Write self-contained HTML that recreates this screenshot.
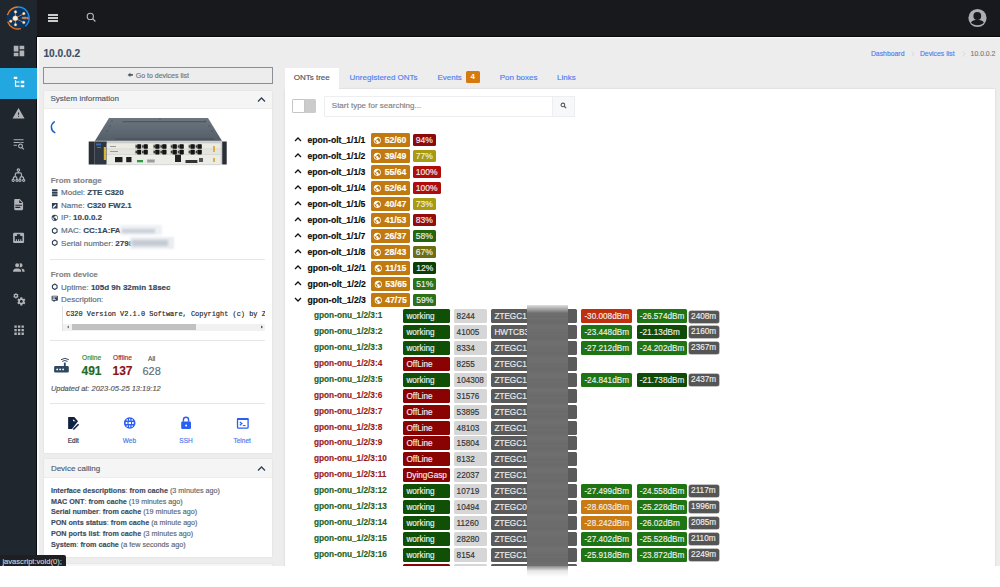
<!DOCTYPE html>
<html><head><meta charset="utf-8"><style>
*{box-sizing:border-box}
html,body{margin:0;padding:0;width:1000px;height:587px;overflow:hidden;background:#fff;font-family:"Liberation Sans", sans-serif}
.t,.t *,.olt span,.onu span{-webkit-text-stroke:0.15px currentColor}
#app{position:absolute;left:0;top:0;width:1000px;height:566px;background:#ededed;overflow:hidden}
#sidebar{position:absolute;left:0;top:0;width:37px;height:566px;background:#20262e}
#topbar{position:absolute;left:37px;top:0;width:963px;height:36.5px;background:#18191d;border-bottom:1px solid #060709}
.abs{position:absolute}
.t{position:absolute;white-space:nowrap}
.card{position:absolute;background:#fff;box-shadow:0 0 1px rgba(0,0,0,.15)}
.chead{position:absolute;left:0;top:0;right:0;background:#f5f5f5;border-bottom:1px solid #ececec}
.olt{position:absolute;left:293px;height:13.5px;white-space:nowrap;font-size:0}
.chev{position:absolute;left:1px;top:3px}
.oname{display:inline-block;vertical-align:top;margin-left:14.6px;margin-top:1px;line-height:13.5px;font-size:8.6px;font-weight:bold;color:#0a0a0a}
.ocnt{display:inline-block;vertical-align:top;margin-left:5.3px;height:13.5px;width:39px;background:#c17a10;border-radius:1.5px;color:#fff;font-size:8.6px;font-weight:bold;line-height:15px;padding-left:2.6px}
.ocnt svg{vertical-align:-1.5px;margin-right:0.5px}
.opct{display:inline-block;vertical-align:top;margin-left:3.1px;margin-top:0.7px;height:11.6px;padding:0 3px;border-radius:1.5px;color:#eee;font-size:8.5px;line-height:13px}
.onu{position:absolute;left:0;height:14px;white-space:nowrap}
.nname{position:absolute;left:314px;top:-1px;line-height:15px;font-size:8.25px;font-weight:bold}
.b{position:absolute;top:0;height:14px;line-height:15.5px;font-size:8.2px;color:#eee;border-radius:1.5px;padding-left:3px}
.st{left:403.4px;width:46.2px}
.num{left:453.6px;width:33.4px;background:#d6d6d6;color:#333}
.ser{left:491.4px;width:85.8px;background:#5b5b5b;color:#eee}
.s1{left:581.4px;width:50.5px}
.s2{left:636.7px;width:50.3px}
.dist{left:689.1px;width:30.1px;top:1.3px;height:12px;line-height:12.6px;background:#555;border-radius:2px;padding-left:2px;box-shadow:0 0 0 0.5px #888}
</style></head><body>
<div id="app">
<div id="topbar">
  <div class="abs" style="left:10.7px;top:14.25px;width:10.5px;height:1.5px;background:#cdcdcd"></div>
  <div class="abs" style="left:10.7px;top:17.2px;width:10.5px;height:1.5px;background:#cdcdcd"></div>
  <div class="abs" style="left:10.7px;top:20.15px;width:10.5px;height:1.5px;background:#cdcdcd"></div>
  <svg class="abs" style="left:45px;top:8px" width="16" height="18" viewBox="82 8 16 18"><circle cx="90.3" cy="16.4" r="3.1" fill="none" stroke="#b8bcc0" stroke-width="1.1"/><path d="M92.6 18.7L95.4 21.5" stroke="#b8bcc0" stroke-width="1.2"/></svg>
  <svg class="abs" style="left:927px;top:5px" width="28" height="26" viewBox="964 5 28 26"><circle cx="977.5" cy="18" r="9.1" fill="#a9aeb4"/><circle cx="977.3" cy="16" r="3.9" fill="#18191d"/><path d="M971 22.5C972.8 18.9 982 18.9 983.8 22.5C981.6 26 973.2 26 971 22.5Z" fill="#18191d"/></svg>
</div>
<div id="sidebar">
  <svg class="abs" style="left:5.8px;top:6.1px" width="24" height="24" viewBox="0 0 24 24">
    <circle cx="12" cy="12" r="11.4" fill="#0a3563"/>
    <path d="M1.37 9.15A11.0 11.0 0 0 1 12.38 1.01" stroke="#f07818" stroke-width="1.4" fill="none"/>
    <path d="M12.38 1.01A11.0 11.0 0 0 1 19.36 20.17" stroke="#1a90e6" stroke-width="1.4" fill="none"/>
    <path d="M14.85 22.63A11.0 11.0 0 0 1 1.66 15.76" stroke="#e8701a" stroke-width="1.4" fill="none"/>
    <g stroke="#e89a4a" stroke-width="0.7"><path d="M9.3 12.3L9.5 5.9M9.3 12.3L17.8 7.6M9.3 12.3L4.7 15.2M9.3 12.3L9.5 18.8M9.3 12.3L17.8 16.5"/></g>
    <g fill="#fff3e3" stroke="#f0a050" stroke-width="0.4"><circle cx="9.3" cy="12.3" r="2.5"/><circle cx="9.5" cy="5.9" r="1.3"/><circle cx="17.8" cy="7.6" r="1.3"/><circle cx="4.7" cy="15.2" r="1.3"/><circle cx="9.5" cy="18.8" r="1.3"/><circle cx="17.8" cy="16.5" r="1.3"/></g>
    <text x="18.9" y="13.4" font-size="3.4" fill="none" stroke="#e89a4a" stroke-width="0.35" font-family="Liberation Sans" text-anchor="middle">oms</text>
  </svg>
  <div class="abs" style="left:0;top:68px;width:37px;height:31px;background:#22a7e0"></div>
  <svg style="position:absolute;left:11.9px;top:44.15px" width="14" height="14" viewBox="0 0 24 24"><path fill="#b0b3b8" fill-rule="evenodd" d="M13,3V9H21V3M13,21H21V11H13M3,21H11V15H3M3,13H11V3H3V13Z"/></svg>
<svg style="position:absolute;left:11.9px;top:74.9px" width="14" height="14" viewBox="0 0 24 24"><path fill="#ffffff" fill-rule="evenodd" d="M3,3H9V7H3V3M15,10H21V14H15V10M15,17H21V21H15V17M13,13H7V18H13V20H7L5,20V9H7V11H13V13Z"/></svg>
<svg style="position:absolute;left:12.05px;top:106.7px" width="13.1" height="13.1" viewBox="0 0 24 24"><path fill="#b0b3b8" fill-rule="evenodd" d="M13,14H11V10H13M13,18H11V16H13M1,21H23L12,2L1,21Z"/></svg>
<svg style="position:absolute;left:11.76px;top:137.1px" width="13.2" height="13.2" viewBox="0 0 24 24"><path fill="#b0b3b8" fill-rule="evenodd" d="M19.31 18.9L22.39 22L21 23.39L17.88 20.32C17.19 20.75 16.37 21 15.5 21C13 21 11 19 11 16.5C11 14 13 12 15.5 12C18 12 20 14 20 16.5C20 17.38 19.75 18.21 19.31 18.9M15.5 19C16.88 19 18 17.88 18 16.5C18 15.12 16.88 14 15.5 14C14.12 14 13 15.12 13 16.5C13 17.88 14.12 19 15.5 19M21 4V6H3V4H21M3 16V14H9V16H3M3 11V9H21V11H18.97C17.96 10.37 16.77 10 15.5 10C14.23 10 13.04 10.37 12.03 11H3Z"/></svg>
<svg style="position:absolute;left:8px;top:165px" width="22" height="21" viewBox="8 165 22 21"><g fill="none" stroke="#b0b3b8" stroke-width="1.15"><circle cx="18.4" cy="170" r="1.2"/><path d="M18.4 171.2V172.8M15.3 176V174.3Q15.3 172.8 16.8 172.8H20Q21.5 172.8 21.5 174.3V176"/><path d="M13.2 179.3Q13.2 176.6 15.2 176.6Q17 176.6 17 179.3M19.9 179.3Q19.9 176.6 21.7 176.6Q23.7 176.6 23.7 179.3"/><circle cx="13.2" cy="180.3" r="1.1"/><circle cx="17" cy="180.3" r="1.1"/><circle cx="19.9" cy="180.3" r="1.1"/><circle cx="23.7" cy="180.3" r="1.1"/></g></svg>
<svg style="position:absolute;left:11.85px;top:198.3px" width="13.3" height="13.3" viewBox="0 0 24 24"><path fill="#b0b3b8" fill-rule="evenodd" d="M13,9H18.5L13,3.5V9M6,2H14L20,8V20A2,2 0 0,1 18,22H6C4.89,22 4,21.1 4,20V4C4,2.89 4.89,2 6,2M15,18V16H6V18H15M18,14V12H6V14H18Z"/></svg>
<svg style="position:absolute;left:12.0px;top:230.7px" width="13.2" height="13.2" viewBox="0 0 24 24"><path fill="#b0b3b8" fill-rule="evenodd" d="M7,15H9V18H11V15H13V18H15V15H17V18H19V9H15V6H9V9H5V18H7V15M4.38,3H19.63C20.94,3 22,4.06 22,5.38V19.63A2.37,2.37 0 0,1 19.63,22H4.38C3.06,22 2,20.94 2,19.63V5.38C2,4.06 3.06,3 4.38,3Z"/></svg>
<svg style="position:absolute;left:11.75px;top:261.2px" width="13.7" height="13.7" viewBox="0 0 24 24"><path fill="#b0b3b8" fill-rule="evenodd" d="M16,17V19H2V17C2,17 2,13 9,13C16,13 16,17 16,17M12.5,7.5A3.5,3.5 0 1,0 9,11A3.5,3.5 0 0,0 12.5,7.5M15.94,13A5.32,5.32 0 0,1 18,17V19H22V17C22,17 22,13.37 15.94,13M15,4A3.39,3.39 0 0,0 13.07,4.59A5,5 0 0,1 13.07,10.41A3.39,3.39 0 0,0 15,11A3.5,3.5 0 0,0 18.5,7.5A3.5,3.5 0 0,0 15,4Z"/></svg>
<svg style="position:absolute;left:11.6px;top:291.8px" width="14.1" height="14.1" viewBox="0 0 24 24"><path fill="#b0b3b8" fill-rule="evenodd" d="M15.9,18.45C17.25,18.45 18.35,17.35 18.35,16C18.35,14.65 17.25,13.55 15.9,13.55C14.54,13.55 13.45,14.65 13.45,16C13.45,17.35 14.54,18.45 15.9,18.45M21.1,16.68L22.58,17.84C22.71,17.95 22.75,18.13 22.66,18.29L21.26,20.71C21.17,20.86 21,20.92 20.83,20.86L19.09,20.16C18.73,20.44 18.33,20.67 17.91,20.85L17.64,22.7C17.62,22.87 17.47,23 17.3,23H14.5C14.32,23 14.18,22.87 14.15,22.7L13.89,20.85C13.46,20.67 13.07,20.44 12.71,20.16L10.96,20.86C10.81,20.92 10.62,20.86 10.54,20.71L9.14,18.29C9.05,18.13 9.09,17.95 9.22,17.84L10.7,16.68L10.65,16L10.7,15.31L9.22,14.16C9.09,14.05 9.05,13.86 9.14,13.71L10.54,11.29C10.62,11.13 10.81,11.07 10.96,11.13L12.71,11.84C13.07,11.56 13.46,11.32 13.89,11.15L14.15,9.29C14.18,9.13 14.32,9 14.5,9H17.3C17.47,9 17.62,9.13 17.64,9.29L17.91,11.15C18.33,11.32 18.73,11.56 19.09,11.84L20.83,11.13C21,11.07 21.17,11.13 21.26,11.29L22.66,13.71C22.75,13.86 22.71,14.05 22.58,14.16L21.1,15.31L21.15,16L21.1,16.68M6.69,8.07C7.56,8.07 8.26,7.37 8.26,6.5C8.26,5.63 7.56,4.92 6.69,4.92A1.58,1.58 0 0,0 5.11,6.5C5.11,7.37 5.82,8.07 6.69,8.07M10.03,6.94L11,7.68C11.07,7.75 11.09,7.87 11.03,7.97L10.13,9.53C10.08,9.63 9.96,9.67 9.86,9.63L8.74,9.18L8,9.62L7.81,10.81C7.79,10.92 7.7,11 7.59,11H5.79C5.67,11 5.58,10.92 5.56,10.81L5.4,9.62L4.64,9.18L3.5,9.63C3.41,9.67 3.3,9.63 3.24,9.53L2.34,7.97C2.28,7.87 2.31,7.75 2.39,7.68L3.34,6.94L3.31,6.5L3.34,6.06L2.39,5.32C2.31,5.25 2.28,5.13 2.34,5.03L3.24,3.47C3.3,3.37 3.41,3.33 3.5,3.37L4.63,3.82L5.4,3.38L5.56,2.19C5.58,2.08 5.67,2 5.79,2H7.59C7.7,2 7.79,2.08 7.81,2.19L8,3.38L8.74,3.82L9.86,3.37C9.96,3.33 10.08,3.37 10.13,3.47L11.03,5.03C11.09,5.13 11.07,5.25 11,5.32L10.03,6.06L10.06,6.5L10.03,6.94Z"/></svg>
<svg style="position:absolute;left:11.5px;top:323.0px" width="14.25" height="14.25" viewBox="0 0 24 24"><path fill="#b0b3b8" fill-rule="evenodd" d="M16,20H20V16H16M16,14H20V10H16M10,8H14V4H10M16,8H20V4H16M10,14H14V10H10M4,14H8V10H4M4,20H8V16H4M10,20H14V16H10M4,8H8V4H4V8Z"/></svg>
</div>
<div class="abs" style="left:37px;top:36.5px;width:963px;height:1.5px;background:#fafafa"></div>
<div class="abs" style="left:37px;top:36.5px;width:1.5px;height:530px;background:#fafafa"></div>
<div class="abs" style="left:36px;top:36px;width:1px;height:32px;background:#0a0c10"></div>
<div class="abs" style="left:36px;top:99px;width:1px;height:467px;background:#0a0c10"></div>

<!-- page header -->
<div class="t" style="left:43.4px;top:47.5px;font-size:10.2px;font-weight:bold;color:#3b4f66;line-height:12px">10.0.0.2</div>
<div class="t" style="left:870.9px;top:48.5px;font-size:6.86px;color:#4f7ff0;line-height:9px">Dashboard</div>
<svg class="abs" style="left:910.5px;top:50.5px" width="4" height="6" viewBox="0 0 4 6"><path d="M0.8 0.5L3 3L0.8 5.5" fill="none" stroke="#cfcfcf" stroke-width="0.7"/></svg>
<div class="t" style="left:919.9px;top:48.5px;font-size:6.86px;color:#4f7ff0;line-height:9px">Devices list</div>
<svg class="abs" style="left:961.5px;top:50.5px" width="4" height="6" viewBox="0 0 4 6"><path d="M0.8 0.5L3 3L0.8 5.5" fill="none" stroke="#cfcfcf" stroke-width="0.7"/></svg>
<div class="t" style="left:970.6px;top:48.5px;font-size:6.86px;color:#808080;line-height:9px">10.0.0.2</div>

<!-- left column -->
<div class="abs" style="left:43.1px;top:67.2px;width:229.6px;height:16.5px;border:1px solid #8a8f96;background:#ededed"></div>
<svg class="abs" style="left:122px;top:68px" width="16" height="16" viewBox="122 68 16 16"><path d="M127.6 74.9L130.4 72.7V74.1H132.9V75.7H130.4V77.1Z" fill="#505a64"/></svg>
<div class="t" style="left:135.7px;top:70.5px;font-size:7px;color:#6c757d;line-height:9px">Go to devices list</div>

<div class="card" style="left:43.8px;top:90.5px;width:228px;height:362.6px">
  <div class="chead" style="height:18.1px"></div>
</div>
<div class="t" style="left:50.5px;top:93.5px;font-size:8px;color:#4b5d70;line-height:10px">System information</div>
<svg class="abs" style="left:256.5px;top:95.5px" width="9" height="7" viewBox="0 0 9 7"><path d="M1 5.5L4.5 2L8 5.5" fill="none" stroke="#2f4254" stroke-width="1.3"/></svg>

<svg class="abs" style="left:49.8px;top:120px" width="14" height="14" viewBox="0 0 14 14"><path d="M4.3 1.8A6.2 6.2 0 0 0 4.8 12.6" fill="none" stroke="#1b62c8" stroke-width="1.5" stroke-linecap="round"/></svg>

<!-- device image -->
<svg class="abs" style="left:88px;top:116px" width="141" height="52" viewBox="0 0 141 52">
<defs><linearGradient id="topg" x1="0" y1="0" x2="0" y2="1"><stop offset="0" stop-color="#6c767f"/><stop offset="1" stop-color="#535d67"/></linearGradient></defs>
<path d="M21 2H120L134.2 25.19999999999999H6.700000000000003Z" fill="url(#topg)"/>
<path d="M34.5 5.700000000000003H118M27 23H126" stroke="#3f474f" stroke-width="0.7"/>
<circle cx="24" cy="5" r="0.5" fill="#2e353c"/>
<circle cx="22" cy="10" r="0.5" fill="#2e353c"/>
<circle cx="19" cy="15" r="0.5" fill="#2e353c"/>
<circle cx="117" cy="5" r="0.5" fill="#2e353c"/>
<circle cx="121" cy="10" r="0.5" fill="#2e353c"/>
<circle cx="124" cy="15" r="0.5" fill="#2e353c"/>
<circle cx="72" cy="2.799999999999997" r="0.5" fill="#2e353c"/>
<path d="M6.700000000000003 25.19999999999999H134.2" stroke="#cfd3d6" stroke-width="0.8"/>
<rect x="6.70" y="25.50" width="127.50" height="23.00" fill="#c9ccc8" />
<rect x="0.70" y="25.50" width="6.00" height="23.00" fill="#2a2f36" />
<rect x="134.20" y="25.50" width="4.50" height="23.00" fill="#2a2f36" />
<rect x="6.70" y="25.50" width="12.00" height="23.00" fill="#2f3742" />
<rect x="8.00" y="27.50" width="5.00" height="2.00" fill="#3a68b0" />
<rect x="9.00" y="31.00" width="4.00" height="1.00" fill="#b06030" />
<rect x="15.80" y="31.00" width="2.40" height="13.00" fill="#d9b43a" />
<rect x="18.70" y="27.30" width="114.00" height="5.40" fill="#ebebe4" />
<rect x="18.70" y="33.20" width="114.00" height="5.00" fill="#e5e5de" />
<rect x="18.70" y="38.70" width="114.00" height="9.30" fill="#ecece6" />
<rect x="47.20" y="28.00" width="6.00" height="4.90" fill="#c8c8c0" />
<rect x="49.12" y="28.20" width="4.08" height="4.60" fill="#141414" rx="0.9"/>
<rect x="47.50" y="29.30" width="1.62" height="2.30" fill="#3a3a3a" />
<rect x="53.80" y="28.00" width="6.00" height="4.90" fill="#c8c8c0" />
<rect x="55.72" y="28.20" width="4.08" height="4.60" fill="#141414" rx="0.9"/>
<rect x="54.10" y="29.30" width="1.62" height="2.30" fill="#3a3a3a" />
<rect x="47.20" y="33.50" width="6.00" height="5.00" fill="#c8c8c0" />
<rect x="49.12" y="33.70" width="4.08" height="4.70" fill="#141414" rx="0.9"/>
<rect x="47.50" y="34.80" width="1.62" height="2.40" fill="#3a3a3a" />
<rect x="53.80" y="33.50" width="6.00" height="5.00" fill="#c8c8c0" />
<rect x="55.72" y="33.70" width="4.08" height="4.70" fill="#141414" rx="0.9"/>
<rect x="54.10" y="34.80" width="1.62" height="2.40" fill="#3a3a3a" />
<rect x="65.20" y="28.00" width="6.35" height="4.90" fill="#c8c8c0" />
<rect x="67.22" y="28.20" width="4.32" height="4.60" fill="#141414" rx="0.9"/>
<rect x="65.50" y="29.30" width="1.72" height="2.30" fill="#3a3a3a" />
<rect x="72.15" y="28.00" width="6.35" height="4.90" fill="#c8c8c0" />
<rect x="74.17" y="28.20" width="4.32" height="4.60" fill="#141414" rx="0.9"/>
<rect x="72.45" y="29.30" width="1.72" height="2.30" fill="#3a3a3a" />
<rect x="65.20" y="33.50" width="6.35" height="5.00" fill="#c8c8c0" />
<rect x="67.22" y="33.70" width="4.32" height="4.70" fill="#141414" rx="0.9"/>
<rect x="65.50" y="34.80" width="1.72" height="2.40" fill="#3a3a3a" />
<rect x="72.15" y="33.50" width="6.35" height="5.00" fill="#c8c8c0" />
<rect x="74.17" y="33.70" width="4.32" height="4.70" fill="#141414" rx="0.9"/>
<rect x="72.45" y="34.80" width="1.72" height="2.40" fill="#3a3a3a" />
<rect x="82.50" y="28.00" width="6.35" height="4.90" fill="#c8c8c0" />
<rect x="84.53" y="28.20" width="4.32" height="4.60" fill="#141414" rx="0.9"/>
<rect x="82.80" y="29.30" width="1.72" height="2.30" fill="#3a3a3a" />
<rect x="89.45" y="28.00" width="6.35" height="4.90" fill="#c8c8c0" />
<rect x="91.47" y="28.20" width="4.32" height="4.60" fill="#141414" rx="0.9"/>
<rect x="89.75" y="29.30" width="1.72" height="2.30" fill="#3a3a3a" />
<rect x="82.50" y="33.50" width="6.35" height="5.00" fill="#c8c8c0" />
<rect x="84.53" y="33.70" width="4.32" height="4.70" fill="#141414" rx="0.9"/>
<rect x="82.80" y="34.80" width="1.72" height="2.40" fill="#3a3a3a" />
<rect x="89.45" y="33.50" width="6.35" height="5.00" fill="#c8c8c0" />
<rect x="91.47" y="33.70" width="4.32" height="4.70" fill="#141414" rx="0.9"/>
<rect x="89.75" y="34.80" width="1.72" height="2.40" fill="#3a3a3a" />
<rect x="100.40" y="28.00" width="6.40" height="4.90" fill="#c8c8c0" />
<rect x="102.44" y="28.20" width="4.36" height="4.60" fill="#141414" rx="0.9"/>
<rect x="100.70" y="29.30" width="1.74" height="2.30" fill="#3a3a3a" />
<rect x="107.40" y="28.00" width="6.40" height="4.90" fill="#c8c8c0" />
<rect x="109.44" y="28.20" width="4.36" height="4.60" fill="#141414" rx="0.9"/>
<rect x="107.70" y="29.30" width="1.74" height="2.30" fill="#3a3a3a" />
<rect x="100.40" y="33.50" width="6.40" height="5.00" fill="#c8c8c0" />
<rect x="102.44" y="33.70" width="4.36" height="4.70" fill="#141414" rx="0.9"/>
<rect x="100.70" y="34.80" width="1.74" height="2.40" fill="#3a3a3a" />
<rect x="107.40" y="33.50" width="6.40" height="5.00" fill="#c8c8c0" />
<rect x="109.44" y="33.70" width="4.36" height="4.70" fill="#141414" rx="0.9"/>
<rect x="107.70" y="34.80" width="1.74" height="2.40" fill="#3a3a3a" />
<rect x="27.00" y="41.00" width="7.50" height="5.20" fill="#1e1e1e" />
<rect x="38.20" y="41.00" width="5.30" height="5.20" fill="#1e1e1e" />
<rect x="49.00" y="44.00" width="6.00" height="2.30" fill="#2d9a45" />
<rect x="59.20" y="43.50" width="7.50" height="3.00" fill="#9a9a9a" />
<rect x="87.00" y="38.70" width="6.00" height="7.30" fill="#222" />
<rect x="97.50" y="44.00" width="11.90" height="3.00" fill="#333" />
<rect x="111.00" y="42.00" width="4.00" height="4.00" fill="#555" />
<rect x="125.00" y="30.00" width="2.00" height="6.00" fill="#d9b43a" />
<rect x="125.00" y="42.00" width="2.00" height="4.00" fill="#d9b43a" />
<rect x="22.00" y="30.00" width="6.00" height="1.00" fill="#999" />
<rect x="22.00" y="35.00" width="8.00" height="1.00" fill="#999" />
<rect x="18.70" y="48.00" width="114.00" height="1.20" fill="#d8dad8" />
</svg>


<div class="t" style="left:50.7px;top:175.5px;font-size:8px;font-weight:bold;color:#858585;line-height:10px">From storage</div>
<div class="t" style="left:50.7px;top:188.2px;font-size:8px;line-height:10px;color:#5b6b7b"><span style="display:inline-block;width:10.4px"><svg width="7.5" height="7.5" viewBox="0 0 24 24" style="vertical-align:-1.4px"><path fill="#2e4154" d="M4,1H20A1,1 0 0,1 21,2V6A1,1 0 0,1 20,7H4A1,1 0 0,1 3,6V2A1,1 0 0,1 4,1M4,9H20A1,1 0 0,1 21,10V14A1,1 0 0,1 20,15H4A1,1 0 0,1 3,14V10A1,1 0 0,1 4,9M4,17H20A1,1 0 0,1 21,18V22A1,1 0 0,1 20,23H4A1,1 0 0,1 3,22V18A1,1 0 0,1 4,17Z"/></svg></span>Model: <b style="color:#34475a">ZTE C320</b></div><div class="t" style="left:50.7px;top:200.8px;font-size:8px;line-height:10px;color:#5b6b7b"><span style="display:inline-block;width:10.4px"><svg width="7.5" height="7.5" viewBox="0 0 24 24" style="vertical-align:-1.4px"><path fill="#2e4154" d="M3 3H21V21H3ZM6 18H9L17 10L14 7L6 15Z"/></svg></span>Name: <b style="color:#34475a">C320 FW2.1</b></div><div class="t" style="left:50.7px;top:213.4px;font-size:8px;line-height:10px;color:#5b6b7b"><span style="display:inline-block;width:10.4px"><svg width="7.5" height="7.5" viewBox="0 0 24 24" style="vertical-align:-1.4px"><path fill="#2e4154" d="M17.9,17.39C17.64,16.59 16.89,16 16,16H15V13A1,1 0 0,0 14,12H8V10H10A1,1 0 0,0 11,9V7H13A2,2 0 0,0 15,5V4.59C17.93,5.77 20,8.64 20,12C20,14.08 19.2,15.97 17.9,17.39M11,19.93C7.05,19.44 4,16.08 4,12C4,11.38 4.08,10.78 4.21,10.21L9,15V16A2,2 0 0,0 11,18M12,2A10,10 0 0,0 2,12A10,10 0 0,0 12,22A10,10 0 0,0 22,12A10,10 0 0,0 12,2Z"/></svg></span>IP: <b style="color:#34475a">10.0.0.2</b></div><div class="t" style="left:50.7px;top:226.0px;font-size:8px;line-height:10px;color:#5b6b7b"><span style="display:inline-block;width:10.4px"><svg width="7.5" height="7.5" viewBox="0 0 24 24" style="vertical-align:-1.4px"><path d="M12 3.5L19.4 7.75V16.25L12 20.5L4.6 16.25V7.75Z" fill="none" stroke="#2e4154" stroke-width="3.6" stroke-linejoin="round"/></svg></span>MAC: <b style="color:#34475a">CC:1A:FA</b></div><div class="t" style="left:50.7px;top:238.6px;font-size:8px;line-height:10px;color:#5b6b7b"><span style="display:inline-block;width:10.4px"><svg width="7.5" height="7.5" viewBox="0 0 24 24" style="vertical-align:-1.4px"><path d="M12 3.5L19.4 7.75V16.25L12 20.5L4.6 16.25V7.75Z" fill="none" stroke="#2e4154" stroke-width="3.6" stroke-linejoin="round"/></svg></span>Serial number: <b style="color:#34475a">2798</b></div><div class="abs" style="left:120.1px;top:225.4px;width:42px;height:10.1px;background:#eef0f3;filter:blur(0.8px)"></div><div class="abs" style="left:122px;top:228.8px;width:33px;height:4.6px;background:#c9d0d8;filter:blur(1px)"></div><div class="abs" style="left:130.3px;top:237px;width:44px;height:11.5px;background:#e9ecf0;filter:blur(0.8px)"></div><div class="abs" style="left:132px;top:240.2px;width:36px;height:5.6px;background:#c4cbd4;filter:blur(1px)"></div>
<div class="abs" style="left:50.4px;top:258.7px;width:214.6px;height:1px;background:#e6e6e6"></div>
<div class="t" style="left:50.7px;top:270.3px;font-size:8px;font-weight:bold;color:#858585;line-height:10px">From device</div>
<div class="t" style="left:50.7px;top:282.5px;font-size:8px;line-height:10px;color:#5b6b7b"><span style="display:inline-block;width:10.4px"><svg width="7.5" height="7.5" viewBox="0 0 24 24" style="vertical-align:-1.4px"><path d="M12 3.5L19.4 7.75V16.25L12 20.5L4.6 16.25V7.75Z" fill="none" stroke="#2e4154" stroke-width="3.6" stroke-linejoin="round"/></svg></span>Uptime: <b style="color:#34475a">105d 9h 32min 18sec</b></div><div class="t" style="left:50.7px;top:294.6px;font-size:8px;line-height:10px;color:#5b6b7b"><span style="display:inline-block;width:10.4px"><svg width="7.5" height="7.5" viewBox="0 0 24 24" style="vertical-align:-1.4px"><path fill="#2e4154" d="M9,22A1,1 0 0,1 8,21V18H4A2,2 0 0,1 2,16V4C2,2.89 2.9,2 4,2H20A2,2 0 0,1 22,4V16A2,2 0 0,1 20,18H13.9L10.2,21.71C10,21.9 9.75,22 9.5,22V22H9M5,5V7H19V5H5M5,9V11H13V9H5M5,13V15H15V13H5Z"/></svg></span>Description:</div>
<div class="abs" style="left:62px;top:306.4px;width:203px;height:25px;border-left:1px solid #e2e2e2;overflow:hidden">
  <div class="t" style="left:3px;top:3.8px;font-family:'Liberation Mono',monospace;font-size:6.95px;line-height:9px;color:#222">C320 Version V2.1.0 Software, Copyright (c) by ZTE Corporation</div>
  <div class="abs" style="left:0;top:17.3px;width:203px;height:7px;background:#f1f1f1"></div>
  <div class="abs" style="left:8.5px;top:17.9px;width:124px;height:5.8px;background:#c1c1c1"></div>
  <svg class="abs" style="left:2.5px;top:18.8px" width="4" height="4" viewBox="0 0 4 4"><path d="M3 0.5L1 2L3 3.5Z" fill="#707070"/></svg>
  <svg class="abs" style="left:196.5px;top:18.8px" width="4" height="4" viewBox="0 0 4 4"><path d="M1 0.5L3 2L1 3.5Z" fill="#505050"/></svg>
</div>
<div class="abs" style="left:50.4px;top:340.2px;width:214.6px;height:1px;background:#e6e6e6"></div>

<svg class="abs" style="left:50px;top:352px" width="24" height="24" viewBox="50 352 24 24"><rect x="54.1" y="366.1" width="14.7" height="6.5" rx="1.3" fill="#2f4760"/><g fill="#fff"><circle cx="57.2" cy="369.4" r="0.9"/><circle cx="60.1" cy="369.4" r="0.9"/><circle cx="63.1" cy="369.4" r="0.9"/></g><rect x="63.9" y="362.6" width="1.8" height="4" fill="#2f4760"/><path d="M61 359.7Q64.9 357 68.8 359.7M62.2 361.4Q64.9 359.6 67.5 361.4" fill="none" stroke="#2f4760" stroke-width="1"/></svg>
<div class="t" style="left:82px;top:354px;font-size:6.6px;color:#2d8a2d;line-height:8px">Online</div>
<div class="t" style="left:81.5px;top:363.7px;font-size:12px;font-weight:bold;color:#1e6b1e;line-height:14px">491</div>
<div class="t" style="left:113px;top:354px;font-size:6.6px;color:#a82828;line-height:8px">Offline</div>
<div class="t" style="left:112.5px;top:363.7px;font-size:12px;font-weight:bold;color:#8a1414;line-height:14px">137</div>
<div class="t" style="left:148px;top:355px;font-size:6.6px;color:#555;line-height:8px">All</div>
<div class="t" style="left:142.4px;top:363.7px;font-size:11px;color:#5b6b7b;line-height:14px">628</div>
<div class="t" style="left:50.9px;top:383.6px;font-size:7.46px;font-style:italic;color:#555;line-height:9px">Updated at: 2023-05-25 13:19:12</div>
<div class="abs" style="left:50.4px;top:403.2px;width:214.6px;height:1px;background:#e6e6e6"></div>

<svg class="abs" style="left:66px;top:415px" width="14" height="16" viewBox="0 0 14 16"><path d="M2.6 2.1H8.3L12 6.3L6 13.9H2.6Q2.1 13.9 2.1 13.4V2.6Q2.1 2.1 2.6 2.1Z" fill="#0f2142"/><path d="M6.9 4.2L9.7 6.3H7.2Z" fill="#fff"/><path d="M12.6 9.3L7.3 14.5" stroke="#0f2142" stroke-width="1.6"/></svg>
<div class="t" style="left:67.7px;top:437px;font-size:6.5px;color:#1e2f45;line-height:8px">Edit</div>
<svg class="abs" style="left:117px;top:413px" width="24" height="20" viewBox="0 0 24 20"><circle cx="12.7" cy="10" r="5.8" fill="#2b5ef3"/><g fill="#fff"><rect x="8.7" y="9" width="1.7" height="2"/><rect x="11.6" y="9" width="2.4" height="2"/><rect x="15.1" y="9" width="1.6" height="2"/><rect x="9.6" y="6.2" width="1.3" height="1.5"/><rect x="12.1" y="5.8" width="1.2" height="1.8"/><rect x="14.5" y="6.2" width="1.3" height="1.5"/><rect x="9.6" y="12.4" width="1.3" height="1.4"/><rect x="12.1" y="12.4" width="1.2" height="1.9"/><rect x="14.5" y="12.4" width="1.3" height="1.4"/></g></svg>
<div class="t" style="left:122.8px;top:437px;font-size:6.5px;color:#4577ee;line-height:8px">Web</div>
<svg class="abs" style="left:179px;top:415px" width="14" height="16" viewBox="0 0 14 16"><path d="M4.4 6.8V4.9A2.6 2.6 0 0 1 9.6 4.9V6.8" fill="none" stroke="#2b5ef3" stroke-width="1.4"/><rect x="2.2" y="6.6" width="9.8" height="7.4" rx="1.2" fill="#2b5ef3"/><circle cx="7.1" cy="10.4" r="1" fill="#fff"/></svg>
<div class="t" style="left:179.3px;top:437px;font-size:6.5px;color:#4577ee;line-height:8px">SSH</div>
<svg class="abs" style="left:235px;top:415px" width="16" height="16" viewBox="0 0 16 16"><rect x="2.5" y="3.6" width="10.6" height="9.6" rx="1" fill="none" stroke="#2b5ef3" stroke-width="1.3"/><rect x="2" y="3" width="11.6" height="2" rx="0.8" fill="#2b5ef3"/><path d="M4.8 7L6.9 8.6L4.8 10.2" fill="none" stroke="#2b5ef3" stroke-width="1.2"/><path d="M7.8 10.6H10.6" stroke="#2b5ef3" stroke-width="1"/></svg>
<div class="t" style="left:233.5px;top:437px;font-size:6.5px;color:#4577ee;line-height:8px">Telnet</div>

<div class="card" style="left:43.8px;top:459.3px;width:228px;height:97.6px">
  <div class="chead" style="height:19.1px"></div>
</div>
<div class="t" style="left:50.9px;top:463.5px;font-size:8px;color:#4b5d70;line-height:10px">Device calling</div>
<svg class="abs" style="left:256.5px;top:465px" width="9" height="7" viewBox="0 0 9 7"><path d="M1 5.5L4.5 2L8 5.5" fill="none" stroke="#2f4254" stroke-width="1.3"/></svg>
<div class="t" style="left:50.9px;top:486.7px;font-size:7.2px;line-height:8px;color:#5c6670"><b style="color:#3d4d5e">Interface descriptions</b>: <b style="color:#3d4d5e">from cache</b> (3 minutes ago)</div>
<div class="t" style="left:50.9px;top:497.55px;font-size:7.2px;line-height:8px;color:#5c6670"><b style="color:#3d4d5e">MAC ONT</b>: <b style="color:#3d4d5e">from cache</b> (19 minutes ago)</div>
<div class="t" style="left:50.9px;top:508.4px;font-size:7.2px;line-height:8px;color:#5c6670"><b style="color:#3d4d5e">Serial number</b>: <b style="color:#3d4d5e">from cache</b> (19 minutes ago)</div>
<div class="t" style="left:50.9px;top:519.25px;font-size:7.2px;line-height:8px;color:#5c6670"><b style="color:#3d4d5e">PON onts status</b>: <b style="color:#3d4d5e">from cache</b> (a minute ago)</div>
<div class="t" style="left:50.9px;top:530.1px;font-size:7.2px;line-height:8px;color:#5c6670"><b style="color:#3d4d5e">PON ports list</b>: <b style="color:#3d4d5e">from cache</b> (3 minutes ago)</div>
<div class="t" style="left:50.9px;top:540.95px;font-size:7.2px;line-height:8px;color:#5c6670"><b style="color:#3d4d5e">System</b>: <b style="color:#3d4d5e">from cache</b> (a few seconds ago)</div>

<div class="card" style="left:43.8px;top:563.5px;width:228px;height:20px;background:#f6f6f6"></div>
<div class="abs" style="left:0;top:555.2px;width:66px;height:11px;background:#1d1f22;border-top-right-radius:2px"></div>
<div class="t" style="left:2.4px;top:557.2px;font-size:7.6px;color:#d0d0d0;line-height:9px">javascript:void(0);</div>

<!-- right panel -->
<div class="abs" style="left:284.9px;top:88.7px;width:710.3px;height:478px;background:#fff;box-shadow:0 0 2px rgba(0,0,0,.12)"></div>
<div class="abs" style="left:284.9px;top:67.8px;width:53.9px;height:21.5px;background:#fff;border-radius:1px 1px 0 0"></div>
<div class="t" style="left:293.7px;top:72.8px;font-size:8px;color:#4b5560;line-height:10px">ONTs tree</div>
<div class="t" style="left:349.6px;top:72.8px;font-size:8px;color:#4f7ff0;line-height:10px">Unregistered ONTs</div>
<div class="t" style="left:437.4px;top:72.8px;font-size:8px;color:#4f7ff0;line-height:10px">Events</div>
<div class="abs" style="left:465.6px;top:71.2px;width:14.4px;height:12.3px;background:#d6790f;border-radius:1.5px;color:#fff;font-size:7.8px;font-weight:bold;line-height:12.8px;text-align:center">4</div>
<div class="t" style="left:499.7px;top:72.8px;font-size:8px;color:#4f7ff0;line-height:10px">Pon boxes</div>
<div class="t" style="left:557.1px;top:72.8px;font-size:8px;color:#4f7ff0;line-height:10px">Links</div>

<div class="abs" style="left:291.9px;top:99.2px;width:23.8px;height:13.8px;background:#cbcbcb;border-radius:1.5px"></div>
<div class="abs" style="left:291.9px;top:99.2px;width:13.2px;height:13.8px;background:#fff;border:1px solid #c4c4c4;border-radius:1.5px"></div>
<div class="abs" style="left:324.2px;top:96.2px;width:250.4px;height:20.4px;border:0.8px solid #eceef1;border-radius:1px"></div>
<div class="abs" style="left:552.2px;top:96.2px;width:22.4px;height:20.4px;background:#f7f8f9;border:0.8px solid #eceef1"></div>
<svg class="abs" style="left:559.8px;top:102.4px" width="7" height="7" viewBox="0 0 24 24"><circle cx="10" cy="10" r="6.2" fill="none" stroke="#505860" stroke-width="3.6"/><path d="M14.5 14.5L21 21" stroke="#505860" stroke-width="4"/></svg>
<div class="t" style="left:331.8px;top:100.8px;font-size:8px;color:#7d8286;line-height:10px">Start type for searching...</div>
<div class="olt" style="top:133.3px"><svg class="chev" width="8" height="7" viewBox="0 0 8 7"><path d="M1 5L4 2L7 5" fill="none" stroke="#111" stroke-width="1.25"/></svg><span class="oname">epon-olt_1/1/1</span><span class="ocnt"><svg width="8.6" height="8.6" viewBox="0 0 24 24"><path fill="#fff" d="M17.9,17.39C17.64,16.59 16.89,16 16,16H15V13A1,1 0 0,0 14,12H8V10H10A1,1 0 0,0 11,9V7H13A2,2 0 0,0 15,5V4.59C17.93,5.77 20,8.64 20,12C20,14.08 19.2,15.97 17.9,17.39M11,19.93C7.05,19.44 4,16.08 4,12C4,11.38 4.08,10.78 4.21,10.21L9,15V16A2,2 0 0,0 11,18M12,2A10,10 0 0,0 2,12A10,10 0 0,0 12,22A10,10 0 0,0 22,12A10,10 0 0,0 12,2Z"/></svg> 52/60</span><span class="opct" style="background:#8c0a0a">94%</span></div>
<div class="olt" style="top:149.3px"><svg class="chev" width="8" height="7" viewBox="0 0 8 7"><path d="M1 5L4 2L7 5" fill="none" stroke="#111" stroke-width="1.25"/></svg><span class="oname">epon-olt_1/1/2</span><span class="ocnt"><svg width="8.6" height="8.6" viewBox="0 0 24 24"><path fill="#fff" d="M17.9,17.39C17.64,16.59 16.89,16 16,16H15V13A1,1 0 0,0 14,12H8V10H10A1,1 0 0,0 11,9V7H13A2,2 0 0,0 15,5V4.59C17.93,5.77 20,8.64 20,12C20,14.08 19.2,15.97 17.9,17.39M11,19.93C7.05,19.44 4,16.08 4,12C4,11.38 4.08,10.78 4.21,10.21L9,15V16A2,2 0 0,0 11,18M12,2A10,10 0 0,0 2,12A10,10 0 0,0 12,22A10,10 0 0,0 22,12A10,10 0 0,0 12,2Z"/></svg> 39/49</span><span class="opct" style="background:#a89a12">77%</span></div>
<div class="olt" style="top:165.3px"><svg class="chev" width="8" height="7" viewBox="0 0 8 7"><path d="M1 5L4 2L7 5" fill="none" stroke="#111" stroke-width="1.25"/></svg><span class="oname">epon-olt_1/1/3</span><span class="ocnt"><svg width="8.6" height="8.6" viewBox="0 0 24 24"><path fill="#fff" d="M17.9,17.39C17.64,16.59 16.89,16 16,16H15V13A1,1 0 0,0 14,12H8V10H10A1,1 0 0,0 11,9V7H13A2,2 0 0,0 15,5V4.59C17.93,5.77 20,8.64 20,12C20,14.08 19.2,15.97 17.9,17.39M11,19.93C7.05,19.44 4,16.08 4,12C4,11.38 4.08,10.78 4.21,10.21L9,15V16A2,2 0 0,0 11,18M12,2A10,10 0 0,0 2,12A10,10 0 0,0 12,22A10,10 0 0,0 22,12A10,10 0 0,0 12,2Z"/></svg> 55/64</span><span class="opct" style="background:#b00c0c">100%</span></div>
<div class="olt" style="top:181.3px"><svg class="chev" width="8" height="7" viewBox="0 0 8 7"><path d="M1 5L4 2L7 5" fill="none" stroke="#111" stroke-width="1.25"/></svg><span class="oname">epon-olt_1/1/4</span><span class="ocnt"><svg width="8.6" height="8.6" viewBox="0 0 24 24"><path fill="#fff" d="M17.9,17.39C17.64,16.59 16.89,16 16,16H15V13A1,1 0 0,0 14,12H8V10H10A1,1 0 0,0 11,9V7H13A2,2 0 0,0 15,5V4.59C17.93,5.77 20,8.64 20,12C20,14.08 19.2,15.97 17.9,17.39M11,19.93C7.05,19.44 4,16.08 4,12C4,11.38 4.08,10.78 4.21,10.21L9,15V16A2,2 0 0,0 11,18M12,2A10,10 0 0,0 2,12A10,10 0 0,0 12,22A10,10 0 0,0 22,12A10,10 0 0,0 12,2Z"/></svg> 52/64</span><span class="opct" style="background:#b00c0c">100%</span></div>
<div class="olt" style="top:197.3px"><svg class="chev" width="8" height="7" viewBox="0 0 8 7"><path d="M1 5L4 2L7 5" fill="none" stroke="#111" stroke-width="1.25"/></svg><span class="oname">epon-olt_1/1/5</span><span class="ocnt"><svg width="8.6" height="8.6" viewBox="0 0 24 24"><path fill="#fff" d="M17.9,17.39C17.64,16.59 16.89,16 16,16H15V13A1,1 0 0,0 14,12H8V10H10A1,1 0 0,0 11,9V7H13A2,2 0 0,0 15,5V4.59C17.93,5.77 20,8.64 20,12C20,14.08 19.2,15.97 17.9,17.39M11,19.93C7.05,19.44 4,16.08 4,12C4,11.38 4.08,10.78 4.21,10.21L9,15V16A2,2 0 0,0 11,18M12,2A10,10 0 0,0 2,12A10,10 0 0,0 12,22A10,10 0 0,0 22,12A10,10 0 0,0 12,2Z"/></svg> 40/47</span><span class="opct" style="background:#a89a12">73%</span></div>
<div class="olt" style="top:213.3px"><svg class="chev" width="8" height="7" viewBox="0 0 8 7"><path d="M1 5L4 2L7 5" fill="none" stroke="#111" stroke-width="1.25"/></svg><span class="oname">epon-olt_1/1/6</span><span class="ocnt"><svg width="8.6" height="8.6" viewBox="0 0 24 24"><path fill="#fff" d="M17.9,17.39C17.64,16.59 16.89,16 16,16H15V13A1,1 0 0,0 14,12H8V10H10A1,1 0 0,0 11,9V7H13A2,2 0 0,0 15,5V4.59C17.93,5.77 20,8.64 20,12C20,14.08 19.2,15.97 17.9,17.39M11,19.93C7.05,19.44 4,16.08 4,12C4,11.38 4.08,10.78 4.21,10.21L9,15V16A2,2 0 0,0 11,18M12,2A10,10 0 0,0 2,12A10,10 0 0,0 12,22A10,10 0 0,0 22,12A10,10 0 0,0 12,2Z"/></svg> 41/53</span><span class="opct" style="background:#960c0c">83%</span></div>
<div class="olt" style="top:229.3px"><svg class="chev" width="8" height="7" viewBox="0 0 8 7"><path d="M1 5L4 2L7 5" fill="none" stroke="#111" stroke-width="1.25"/></svg><span class="oname">epon-olt_1/1/7</span><span class="ocnt"><svg width="8.6" height="8.6" viewBox="0 0 24 24"><path fill="#fff" d="M17.9,17.39C17.64,16.59 16.89,16 16,16H15V13A1,1 0 0,0 14,12H8V10H10A1,1 0 0,0 11,9V7H13A2,2 0 0,0 15,5V4.59C17.93,5.77 20,8.64 20,12C20,14.08 19.2,15.97 17.9,17.39M11,19.93C7.05,19.44 4,16.08 4,12C4,11.38 4.08,10.78 4.21,10.21L9,15V16A2,2 0 0,0 11,18M12,2A10,10 0 0,0 2,12A10,10 0 0,0 12,22A10,10 0 0,0 22,12A10,10 0 0,0 12,2Z"/></svg> 26/37</span><span class="opct" style="background:#23660f">58%</span></div>
<div class="olt" style="top:245.3px"><svg class="chev" width="8" height="7" viewBox="0 0 8 7"><path d="M1 5L4 2L7 5" fill="none" stroke="#111" stroke-width="1.25"/></svg><span class="oname">epon-olt_1/1/8</span><span class="ocnt"><svg width="8.6" height="8.6" viewBox="0 0 24 24"><path fill="#fff" d="M17.9,17.39C17.64,16.59 16.89,16 16,16H15V13A1,1 0 0,0 14,12H8V10H10A1,1 0 0,0 11,9V7H13A2,2 0 0,0 15,5V4.59C17.93,5.77 20,8.64 20,12C20,14.08 19.2,15.97 17.9,17.39M11,19.93C7.05,19.44 4,16.08 4,12C4,11.38 4.08,10.78 4.21,10.21L9,15V16A2,2 0 0,0 11,18M12,2A10,10 0 0,0 2,12A10,10 0 0,0 12,22A10,10 0 0,0 22,12A10,10 0 0,0 12,2Z"/></svg> 28/43</span><span class="opct" style="background:#6b6e14">67%</span></div>
<div class="olt" style="top:261.3px"><svg class="chev" width="8" height="7" viewBox="0 0 8 7"><path d="M1 5L4 2L7 5" fill="none" stroke="#111" stroke-width="1.25"/></svg><span class="oname">gpon-olt_1/2/1</span><span class="ocnt"><svg width="8.6" height="8.6" viewBox="0 0 24 24"><path fill="#fff" d="M17.9,17.39C17.64,16.59 16.89,16 16,16H15V13A1,1 0 0,0 14,12H8V10H10A1,1 0 0,0 11,9V7H13A2,2 0 0,0 15,5V4.59C17.93,5.77 20,8.64 20,12C20,14.08 19.2,15.97 17.9,17.39M11,19.93C7.05,19.44 4,16.08 4,12C4,11.38 4.08,10.78 4.21,10.21L9,15V16A2,2 0 0,0 11,18M12,2A10,10 0 0,0 2,12A10,10 0 0,0 12,22A10,10 0 0,0 22,12A10,10 0 0,0 12,2Z"/></svg> 11/15</span><span class="opct" style="background:#0d3d05">12%</span></div>
<div class="olt" style="top:277.3px"><svg class="chev" width="8" height="7" viewBox="0 0 8 7"><path d="M1 5L4 2L7 5" fill="none" stroke="#111" stroke-width="1.25"/></svg><span class="oname">gpon-olt_1/2/2</span><span class="ocnt"><svg width="8.6" height="8.6" viewBox="0 0 24 24"><path fill="#fff" d="M17.9,17.39C17.64,16.59 16.89,16 16,16H15V13A1,1 0 0,0 14,12H8V10H10A1,1 0 0,0 11,9V7H13A2,2 0 0,0 15,5V4.59C17.93,5.77 20,8.64 20,12C20,14.08 19.2,15.97 17.9,17.39M11,19.93C7.05,19.44 4,16.08 4,12C4,11.38 4.08,10.78 4.21,10.21L9,15V16A2,2 0 0,0 11,18M12,2A10,10 0 0,0 2,12A10,10 0 0,0 12,22A10,10 0 0,0 22,12A10,10 0 0,0 12,2Z"/></svg> 53/65</span><span class="opct" style="background:#2c7018">51%</span></div>
<div class="olt" style="top:293.3px"><svg class="chev" width="8" height="7" viewBox="0 0 8 7"><path d="M1 2L4 5L7 2" fill="none" stroke="#111" stroke-width="1.25"/></svg><span class="oname">gpon-olt_1/2/3</span><span class="ocnt"><svg width="8.6" height="8.6" viewBox="0 0 24 24"><path fill="#fff" d="M17.9,17.39C17.64,16.59 16.89,16 16,16H15V13A1,1 0 0,0 14,12H8V10H10A1,1 0 0,0 11,9V7H13A2,2 0 0,0 15,5V4.59C17.93,5.77 20,8.64 20,12C20,14.08 19.2,15.97 17.9,17.39M11,19.93C7.05,19.44 4,16.08 4,12C4,11.38 4.08,10.78 4.21,10.21L9,15V16A2,2 0 0,0 11,18M12,2A10,10 0 0,0 2,12A10,10 0 0,0 12,22A10,10 0 0,0 22,12A10,10 0 0,0 12,2Z"/></svg> 47/75</span><span class="opct" style="background:#2c7018">59%</span></div>
<div class="onu" style="top:309.3px"><span class="nname" style="color:#246224">gpon-onu_1/2/3:1</span><span class="b st" style="background:#0f5006">working</span><span class="b num">8244</span><span class="b ser">ZTEGC1</span><span class="b s1" style="background:#c0300f">-30.008dBm</span><span class="b s2" style="background:#1f7414">-26.574dBm</span><span class="b dist">2408m</span></div>
<div class="onu" style="top:325.19px"><span class="nname" style="color:#246224">gpon-onu_1/2/3:2</span><span class="b st" style="background:#0f5006">working</span><span class="b num">41005</span><span class="b ser">HWTCB3</span><span class="b s1" style="background:#1f7414">-23.448dBm</span><span class="b s2" style="background:#0f4a06">-21.13dBm</span><span class="b dist">2160m</span></div>
<div class="onu" style="top:341.08000000000004px"><span class="nname" style="color:#246224">gpon-onu_1/2/3:3</span><span class="b st" style="background:#0f5006">working</span><span class="b num">8334</span><span class="b ser">ZTEGC1</span><span class="b s1" style="background:#1f7414">-27.212dBm</span><span class="b s2" style="background:#1f7414">-24.202dBm</span><span class="b dist">2367m</span></div>
<div class="onu" style="top:356.97px"><span class="nname" style="color:#9a1a20">gpon-onu_1/2/3:4</span><span class="b st" style="background:#8a0303">OffLine</span><span class="b num">8255</span><span class="b ser">ZTEGC1</span></div>
<div class="onu" style="top:372.86px"><span class="nname" style="color:#246224">gpon-onu_1/2/3:5</span><span class="b st" style="background:#0f5006">working</span><span class="b num">104308</span><span class="b ser">ZTEGC1</span><span class="b s1" style="background:#1f7414">-24.841dBm</span><span class="b s2" style="background:#0f4a06">-21.738dBm</span><span class="b dist">2437m</span></div>
<div class="onu" style="top:388.75px"><span class="nname" style="color:#9a1a20">gpon-onu_1/2/3:6</span><span class="b st" style="background:#8a0303">OffLine</span><span class="b num">31576</span><span class="b ser">ZTEGC1</span></div>
<div class="onu" style="top:404.64px"><span class="nname" style="color:#9a1a20">gpon-onu_1/2/3:7</span><span class="b st" style="background:#8a0303">OffLine</span><span class="b num">53895</span><span class="b ser">ZTEGC1</span></div>
<div class="onu" style="top:420.53000000000003px"><span class="nname" style="color:#9a1a20">gpon-onu_1/2/3:8</span><span class="b st" style="background:#8a0303">OffLine</span><span class="b num">48103</span><span class="b ser">ZTEGC1</span></div>
<div class="onu" style="top:436.42px"><span class="nname" style="color:#9a1a20">gpon-onu_1/2/3:9</span><span class="b st" style="background:#8a0303">OffLine</span><span class="b num">15804</span><span class="b ser">ZTEGC1</span></div>
<div class="onu" style="top:452.31px"><span class="nname" style="color:#9a1a20">gpon-onu_1/2/3:10</span><span class="b st" style="background:#8a0303">OffLine</span><span class="b num">8132</span><span class="b ser">ZTEGC1</span></div>
<div class="onu" style="top:468.20000000000005px"><span class="nname" style="color:#9a1a20">gpon-onu_1/2/3:11</span><span class="b st" style="background:#8a0303">DyingGasp</span><span class="b num">22037</span><span class="b ser">ZTEGC1</span></div>
<div class="onu" style="top:484.09000000000003px"><span class="nname" style="color:#246224">gpon-onu_1/2/3:12</span><span class="b st" style="background:#0f5006">working</span><span class="b num">10719</span><span class="b ser">ZTEGC1</span><span class="b s1" style="background:#1f7414">-27.499dBm</span><span class="b s2" style="background:#1f7414">-24.558dBm</span><span class="b dist">2117m</span></div>
<div class="onu" style="top:499.98px"><span class="nname" style="color:#246224">gpon-onu_1/2/3:13</span><span class="b st" style="background:#0f5006">working</span><span class="b num">10494</span><span class="b ser">ZTEGC0</span><span class="b s1" style="background:#c97a12">-28.603dBm</span><span class="b s2" style="background:#1f7414">-25.228dBm</span><span class="b dist">1996m</span></div>
<div class="onu" style="top:515.87px"><span class="nname" style="color:#246224">gpon-onu_1/2/3:14</span><span class="b st" style="background:#0f5006">working</span><span class="b num">11260</span><span class="b ser">ZTEGC1</span><span class="b s1" style="background:#c97a12">-28.242dBm</span><span class="b s2" style="background:#1f7414">-26.02dBm</span><span class="b dist">2085m</span></div>
<div class="onu" style="top:531.76px"><span class="nname" style="color:#246224">gpon-onu_1/2/3:15</span><span class="b st" style="background:#0f5006">working</span><span class="b num">28280</span><span class="b ser">ZTEGC1</span><span class="b s1" style="background:#1f7414">-27.402dBm</span><span class="b s2" style="background:#1f7414">-25.528dBm</span><span class="b dist">2110m</span></div>
<div class="onu" style="top:547.6500000000001px"><span class="nname" style="color:#246224">gpon-onu_1/2/3:16</span><span class="b st" style="background:#0f5006">working</span><span class="b num">8154</span><span class="b ser">ZTEGC1</span><span class="b s1" style="background:#1f7414">-25.918dBm</span><span class="b s2" style="background:#1f7414">-23.872dBm</span><span class="b dist">2249m</span></div>
<div class="onu" style="top:563.54px"><span class="nname" style="color:#9a1a20">gpon-onu_1/2/3:17</span><span class="b st" style="background:#8a0303">OffLine</span><span class="b num">0</span><span class="b ser">ZTEGC1</span></div>
</div>
<div class="abs" style="left:526.9px;top:305.2px;width:41.3px;height:272px;overflow:hidden">
  <div class="abs" style="left:0;top:0;width:41.3px;height:272px;background:repeating-linear-gradient(180deg,#6c6c6c 0px,#6a6a6a 3px,#707070 8px,#6a6a6a 15px,#7a7a7a 16.5px,#6c6c6c 17.5px);background-size:100% 15.89px;background-position:0 -1.9px"></div>
  <div class="abs" style="left:0;top:0;width:41.3px;height:8px;background:linear-gradient(#e0e0e0,rgba(110,110,110,0))"></div>
  <div class="abs" style="left:0;top:260.8px;width:41.3px;height:11.2px;background:linear-gradient(#8a8a8a,#e8e8e8 45%,#fff)"></div>
</div>
</body></html>
